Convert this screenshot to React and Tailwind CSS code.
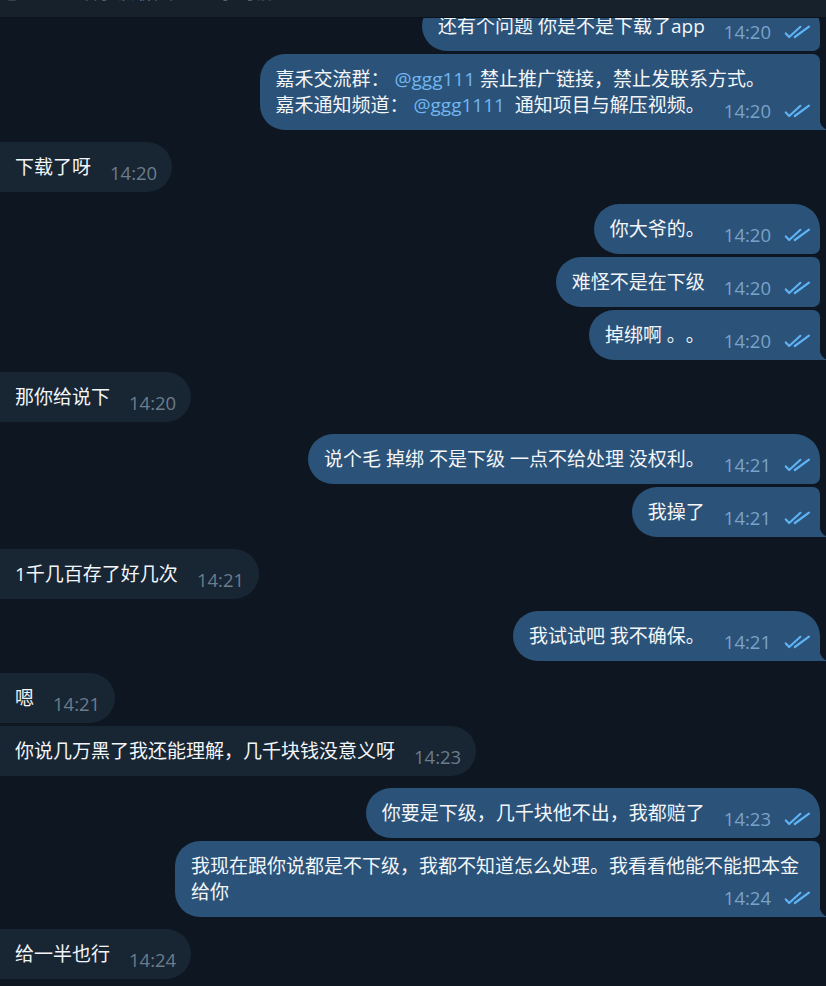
import React from 'react';

const FONT = "font-['Open_Sans','Noto_Sans_CJK_SC',sans-serif]";

const Link = ({ children }) => <span className="text-[#71b7f2]">{children}</span>;

// groups of consecutive messages from one side
const groups = [
  {
    side: 'out',
    items: [
      { lines: ['还有个问题 你是不是下载了app'], time: '14:20' },
      {
        lines: [
          <>嘉禾交流群： <Link>@ggg111</Link> 禁止推广链接，禁止发联系方式。</>,
          <>嘉禾通知频道： <Link>@ggg1111</Link>  通知项目与解压视频。</>,
        ],
        time: '14:20',
      },
    ],
  },
  { side: 'in', items: [{ lines: ['下载了呀'], time: '14:20' }] },
  {
    side: 'out',
    items: [
      { lines: ['你大爷的。'], time: '14:20' },
      { lines: ['难怪不是在下级'], time: '14:20' },
      { lines: ['掉绑啊 。。'], time: '14:20' },
    ],
  },
  { side: 'in', items: [{ lines: ['那你给说下'], time: '14:20' }] },
  {
    side: 'out',
    items: [
      { lines: ['说个毛 掉绑 不是下级 一点不给处理 没权利。'], time: '14:21' },
      { lines: ['我操了'], time: '14:21' },
    ],
  },
  { side: 'in', items: [{ lines: ['1千几百存了好几次'], time: '14:21' }] },
  { side: 'out', items: [{ lines: ['我试试吧 我不确保。'], time: '14:21' }] },
  {
    side: 'in',
    items: [
      { lines: ['嗯'], time: '14:21' },
      { lines: ['你说几万黑了我还能理解，几千块钱没意义呀'], time: '14:23' },
    ],
  },
  {
    side: 'out',
    items: [
      { lines: ['你要是下级，几千块他不出，我都赔了'], time: '14:23' },
      {
        lines: ['我现在跟你说都是不下级，我都不知道怎么处理。我看看他能不能把本金', '给你'],
        time: '14:24',
        wide: true,
      },
    ],
  },
  { side: 'in', items: [{ lines: ['给一半也行'], time: '14:24' }] },
];

const Checks = () => (
  <svg width="27" height="14" viewBox="0 0 27 14" fill="none" className="ml-[13px] shrink-0">
    <path d="M1.8 8.4 L5.2 12 L16.4 1.8" stroke="#5db3f5" strokeWidth="2.2" strokeLinecap="round" strokeLinejoin="round" />
    <path d="M10.8 12 L25 1.6" stroke="#5db3f5" strokeWidth="2.2" strokeLinecap="round" />
  </svg>
);

const Tail = () => (
  <svg width="9" height="16" viewBox="0 0 9 16" className="absolute right-[-8px] bottom-0">
    <path d="M0 0 C0 9 3 14.5 9 16 L0 16 Z" fill="#2b5278" />
  </svg>
);

const Bubble = ({ msg, side, first, last }) => {
  const out = side === 'out';
  let shape;
  if (!out) shape = 'rounded-r-[25px] pl-[15px] pr-[15px] bg-[#182533]';
  else if (first && last) shape = 'rounded-l-[25px] rounded-tr-[25px] pl-[16px] pr-[9px] bg-[#2b5278]';
  else if (first) shape = 'rounded-l-[25px] rounded-tr-[25px] rounded-br-[7px] pl-[16px] pr-[9px] bg-[#2b5278]';
  else if (last) shape = 'rounded-l-[25px] rounded-tr-[7px] pl-[16px] pr-[9px] bg-[#2b5278]';
  else shape = 'rounded-l-[25px] rounded-r-[7px] pl-[16px] pr-[9px] bg-[#2b5278]';

  const head = msg.lines.slice(0, -1);
  const tail = msg.lines[msg.lines.length - 1];

  return (
    <div className={`relative py-[12px] text-[19px] leading-[26px] text-[#f3f6f9] ${shape} ${msg.wide ? 'w-[645px]' : ''}`}>
      {head.map((l, i) => (
        <div key={i} className="whitespace-pre">{l}</div>
      ))}
      <div className="flex items-end">
        <span className="whitespace-pre">{tail}</span>
        <span className="flex-1" />
        <div className="flex items-center h-[26px] translate-y-[6px] ml-[19px]">
          <span className={`text-[18.5px] ${out ? 'text-[#7aa2ca]' : 'text-[#6b7c8c]'}`}>{msg.time}</span>
          {out && <Checks />}
        </div>
      </div>
      {out && last && <Tail />}
    </div>
  );
}

export default function App() {
  return (
    <div className={`relative w-[826px] h-[986px] overflow-hidden bg-[#0e1621] [text-spacing-trim:space-all] ${FONT}`}>
      {/* top bar, mostly scrolled away */}
      <div className="absolute top-0 inset-x-0 z-10 h-[18px] overflow-hidden bg-[#17212b] border-b border-[#0b1219]">
        <div className="-mt-[20px] pl-[2px] text-[19px] leading-[24px] text-[#8393a3] whitespace-nowrap">
          您已经置顶了该聊天 · 1个小时前
        </div>
      </div>

      <div className="flex flex-col pt-[1px]">
        {groups.map((g, gi) => (
          <div key={gi} className={`flex flex-col gap-[3px] ${gi === 0 ? '' : 'mt-[12px]'} ${g.side === 'out' ? 'items-end pr-[6px]' : 'items-start'}`}>
            {g.items.map((m, i) => (
              <Bubble key={i} msg={m} side={g.side} first={i === 0} last={i === g.items.length - 1} />
            ))}
          </div>
        ))}
      </div>
    </div>
  );
}
